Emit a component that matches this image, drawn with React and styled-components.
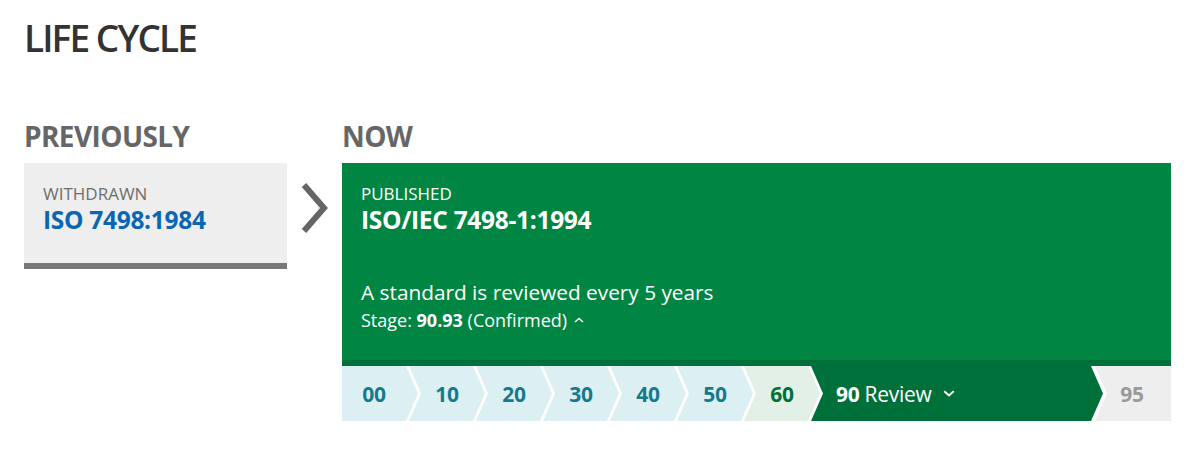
import React from 'react'
import styled, { createGlobalStyle } from 'styled-components'

const GlobalStyle = createGlobalStyle`
body {
  margin: 0;
  background: #fff;
  font-family: "Open Sans", "Noto Sans", sans-serif;
}
`

const Page = styled.main`
padding: 14px 22px 0 24px;
`
const Title = styled.h1`
margin: 0 0 58px 0;
font-size: 37px;
line-height: 48px;
font-weight: 600;
color: #333;
letter-spacing: -1.9px;
`
const Columns = styled.section`
display: grid;
grid-template-columns: 263px 55px 1fr;
`
const Heading = styled.h2`
margin: 0 0 11px 0;
font-size: 28px;
line-height: 32px;
font-weight: 700;
color: #666;
letter-spacing: -0.6px;
`
const Arrow = styled.div`
padding-top: 62px;
padding-left: 13px;
`
const OldCard = styled.div`
background: #eee;
border-bottom: 6px solid #777;
padding: 20px 19px 0;
box-sizing: border-box;
height: 106px;
`
const Status = styled.div`
font-size: 17px;
line-height: 22px;
text-transform: uppercase;
color: ${p => (p.light ? '#fff' : '#6e6e6e')};
`
const Ref = styled.a`
display: block;
font-size: 24.5px;
line-height: 30px;
font-weight: 700;
color: ${p => (p.light ? '#fff' : '#0a66b2')};
text-decoration: none;
letter-spacing: -0.3px;
`
const NowCard = styled.div`
background: #008542;
border-bottom: 6px solid #00703a;
padding: 20px 19px 0;
height: 203px;
box-sizing: border-box;
`
const Review = styled.p`
margin: 42px 0 0 0;
font-size: 20.8px;
line-height: 30px;
color: #fff;
`
const Stage = styled.div`
margin-top: 1px;
display: flex;
align-items: center;
gap: 7px;
font-size: 18px;
line-height: 24px;
color: #fff;
b { font-weight: 700; }
`
const Bar = styled.div`
display: flex;
height: 55px;
background: #fff;
`
const clips = {
  first: 'polygon(0 0, calc(100% - 12px) 0, 100% 50%, calc(100% - 12px) 100%, 0 100%)',
  mid: 'polygon(0 0, calc(100% - 12px) 0, 100% 50%, calc(100% - 12px) 100%, 0 100%, 12px 50%)',
  last: 'polygon(0 0, 100% 0, 100% 100%, 0 100%, 12px 50%)'
}
const tones = {
  done: { bg: '#dcf0f4', fg: '#167a8e' },
  near: { bg: '#e2f0e7', fg: '#00703a' },
  current: { bg: '#00703a', fg: '#fff' },
  next: { bg: '#eeeeee', fg: '#9a9a9a' }
}
const pads = {
  first: '0 12px 0 0',
  mid: '0 12px',
  last: '0 14px 0 12px'
}
const Step = styled.div`
box-sizing: border-box;
flex: ${p => (p.grow ? '1' : '0 0 76px')};
margin-left: ${p => (p.shape === 'first' ? '0' : p.shape === 'last' ? '-8px' : '-9px')};
padding: ${p => (p.grow ? '0 12px 0 25px' : pads[p.shape])};
display: flex;
align-items: center;
justify-content: ${p => (p.grow ? 'flex-start' : 'center')};
gap: 12px;
white-space: nowrap;
background: ${p => tones[p.tone].bg};
color: ${p => tones[p.tone].fg};
clip-path: ${p => clips[p.shape]};
font-size: 21px;
font-weight: 700;
letter-spacing: -0.3px;
span { font-weight: 400; }
`

const steps = ['00', '10', '20', '30', '40', '50']

function Chevron () {
  return (
    <svg width='30' height='54' viewBox='0 0 30 54'>
      <polyline points='4,3 24,26 4,49' fill='none' stroke='#666' strokeWidth='6' />
    </svg>
  )
}

function Caret ({ up, size = 10 }) {
  return (
    <svg width={size} height={size * 0.6} viewBox='0 0 10 6'>
      <polyline points={up ? '1,5 5,1.5 9,5' : '1,1 5,4.5 9,1'} fill='none' stroke='#fff' strokeWidth='1.6' />
    </svg>
  )
}

export default function App () {
  return (
    <>
      <GlobalStyle />
      <Page>
        <Title>LIFE CYCLE</Title>
        <Columns>
          <div>
            <Heading>PREVIOUSLY</Heading>
            <OldCard>
              <Status>Withdrawn</Status>
              <Ref href='#'>ISO 7498:1984</Ref>
            </OldCard>
          </div>
          <Arrow><Chevron /></Arrow>
          <div>
            <Heading>NOW</Heading>
            <NowCard>
              <Status light>Published</Status>
              <Ref light href='#'>ISO/IEC 7498-1:1994</Ref>
              <Review>A standard is reviewed every 5 years</Review>
              <Stage>
                <span>Stage: <b>90.93</b> (Confirmed)</span>
                <Caret up />
              </Stage>
            </NowCard>
            <Bar>
              {steps.map((s, i) => (
                <Step key={s} tone='done' shape={i === 0 ? 'first' : 'mid'}>{s}</Step>
              ))}
              <Step tone='near' shape='mid'>60</Step>
              <Step tone='current' shape='mid' grow>
                <div>90 <span>Review</span></div>
                <Caret size={12} />
              </Step>
              <Step tone='next' shape='last'>95</Step>
            </Bar>
          </div>
        </Columns>
      </Page>
    </>
  )
}
